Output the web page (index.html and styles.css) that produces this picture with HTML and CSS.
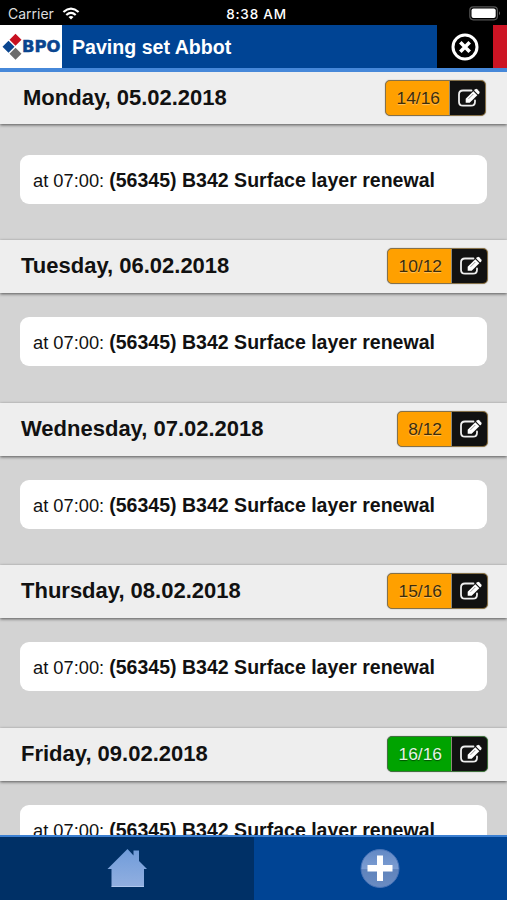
FILE: index.html
```
<!DOCTYPE html>
<html lang="en">
<head>
    <meta charset="UTF-8">
    <meta name="viewport" content="width=device-width, initial-scale=1.0">
    <title>Paving set Abbot</title>
    <link rel="stylesheet" href="styles.css">
</head>
<body>
    <!-- Shared icon -->
    <svg class="sprite" width="0" height="0">
        <symbol id="edit" viewBox="0 0 26 22">
            <path d="M16.500 3.500H8Q4 3.500 4 7.500V14.700Q4 18.700 8 18.700H16Q20 18.700 20 14.700V13.500" fill="none" stroke="#eee" stroke-width="1.800" stroke-linecap="round"/>
            <path d="M10.700 15.800V11.800L18.300 4.200L22.300 8.200L14.700 15.800Z" fill="#fff"/>
            <path d="M19.100 3.400L20.300 2.200Q21.200 1.500 22.100 2.200L24.300 4.400Q25 5.300 24.300 6.200L23.100 7.400Z" fill="#fff"/>
            <path d="M13.500 11.800L18.300 7" fill="none" stroke="#444" stroke-width=".6"/>
        </symbol>
    </svg>

    <div class="status-bar">
        <div class="carrier">
            <span>Carrier</span>
            <svg width="18" height="13" viewBox="0 0 18 13" fill="none" stroke="#fff" stroke-width="2.200">
                <path d="M1.400 5Q9-1.800 16.600 5M4.300 8Q9 3.800 13.700 8"/>
                <path d="M9 12.500L6.500 9.900Q9 8 11.500 9.900Z" fill="#fff" stroke="none"/>
            </svg>
        </div>
        <span class="clock">8:38 AM</span>
        <svg class="battery" width="32" height="15" viewBox="0 0 32 15">
            <rect x=".8" y=".8" width="27.600" height="13" rx="3.500" fill="none" stroke="#555" stroke-width="1.200"/>
            <rect x="2.500" y="2.500" width="24.200" height="9.600" rx="2" fill="#fff"/>
            <path d="M30 5.200Q32 7.200 30 9.200Z" fill="#666"/>
        </svg>
    </div>

    <header class="header">
        <div class="logo">
            <svg width="20" height="28" viewBox="0 0 20 28">
                <path d="M13.500 .8L19.500 6.800L13.500 12.800L7.500 6.800Z" fill="#c81020"/>
                <path d="M6.500 7.700L12.500 13.700L6.500 19.700L.5 13.700Z" fill="#0a458f"/>
                <path d="M13.500 14.700L19.500 20.700L13.500 26.700L7.500 20.700Z" fill="#6c6c6c"/>
            </svg>
            <span>BPO</span>
        </div>
        <h1>Paving set Abbot</h1>
        <div class="close">
            <svg width="28" height="28" viewBox="0 0 28 28" fill="none" stroke="#fff">
                <circle cx="14" cy="14" r="12" stroke-width="3"/>
                <path d="M9.300 9.300L18.700 18.700M18.700 9.300L9.300 18.700" stroke-width="3.600"/>
            </svg>
        </div>
        <div class="alert"></div>
    </header>

    <main class="days">
        <section class="day first">
            <div class="day-header">
                <h2>Monday, 05.02.2018</h2>
                <div class="badge"><span class="count">14/16</span><span class="edit"><svg width="26" height="22"><use href="#edit"/></svg></span></div>
            </div>
            <div class="job">at 07:00: <b>(56345) B342 Surface layer renewal</b></div>
        </section>
        <section class="day">
            <div class="day-header">
                <h2>Tuesday, 06.02.2018</h2>
                <div class="badge"><span class="count">10/12</span><span class="edit"><svg width="26" height="22"><use href="#edit"/></svg></span></div>
            </div>
            <div class="job">at 07:00: <b>(56345) B342 Surface layer renewal</b></div>
        </section>
        <section class="day">
            <div class="day-header">
                <h2>Wednesday, 07.02.2018</h2>
                <div class="badge"><span class="count">8/12</span><span class="edit"><svg width="26" height="22"><use href="#edit"/></svg></span></div>
            </div>
            <div class="job">at 07:00: <b>(56345) B342 Surface layer renewal</b></div>
        </section>
        <section class="day">
            <div class="day-header">
                <h2>Thursday, 08.02.2018</h2>
                <div class="badge"><span class="count">15/16</span><span class="edit"><svg width="26" height="22"><use href="#edit"/></svg></span></div>
            </div>
            <div class="job">at 07:00: <b>(56345) B342 Surface layer renewal</b></div>
        </section>
        <section class="day">
            <div class="day-header">
                <h2>Friday, 09.02.2018</h2>
                <div class="badge full"><span class="count">16/16</span><span class="edit"><svg width="26" height="22"><use href="#edit"/></svg></span></div>
            </div>
            <div class="job">at 07:00: <b>(56345) B342 Surface layer renewal</b></div>
        </section>
    </main>

    <nav class="tabs">
        <div class="tab active">
            <svg width="42" height="42" viewBox="0 0 42 42">
                <defs>
                    <linearGradient id="house" x1="0" y1="0" x2="0" y2="1">
                        <stop offset="0" stop-color="#709cda"/>
                        <stop offset="1" stop-color="#91afe0"/>
                    </linearGradient>
                </defs>
                <path d="M21.500 1L27.500 7.500V2.500H33V13L41 21H38V38.500H5.500V21H1.500Z" fill="url(#house)"/>
                <path d="M5.500 38.500H38" stroke="#b0c8ee"/>
            </svg>
        </div>
        <div class="tab">
            <svg width="42" height="42" viewBox="0 0 42 42">
                <defs>
                    <linearGradient id="disc" x1="0" y1="0" x2="0" y2="1">
                        <stop offset="0" stop-color="#6288c4"/>
                        <stop offset=".5" stop-color="#7c9dd2"/>
                        <stop offset=".53" stop-color="#5f83bc"/>
                        <stop offset="1" stop-color="#6a8cc2"/>
                    </linearGradient>
                </defs>
                <circle cx="21" cy="20.500" r="19" fill="url(#disc)" stroke="#4773b8"/>
                <path d="M18 7.500H24V17H33.500V23.500H24V33H18V23.500H8.500V17H18Z" fill="#fff"/>
            </svg>
        </div>
    </nav>
</body>
</html>
```
FILE: styles.css
```
* {
    box-sizing: border-box;
}
body {
    display: flex;
    flex-direction: column;
    height: 900px;
    margin: 0;
    overflow: hidden;
    background-color: #d3d3d3;
    color: #111;
    font-family: "Liberation Sans", Arial, sans-serif;
}
h1, h2 {
    margin: 0;
    white-space: nowrap;
}
.sprite {
    display: none;
}
.status-bar {
    display: grid;
    grid-template-columns: 1fr auto 1fr;
    align-items: center;
    flex: none;
    height: 25px;
    padding: 2px 6px 0 8px;
    background-color: #000;
    color: #fff;
    font-family: Inter, sans-serif;
    font-size: 14px;
}
.carrier {
    display: flex;
    align-items: center;
    gap: 8px;
    color: #ddd;
}
.clock {
    padding-left: 4px;
    font-size: 13.5px;
    font-weight: 500;
    letter-spacing: 0.8px;
}
.battery {
    justify-self: end;
}
.header {
    display: flex;
    flex: none;
    height: 47px;
    border-bottom: 4px solid #4688d9;
    background-color: #004494;
    color: #fff;
}
.logo {
    display: flex;
    align-items: center;
    width: 62px;
    padding-left: 2px;
    background-color: #fff;
    color: #0a458f;
    font-family: "DejaVu Sans", sans-serif;
    font-size: 16.4px;
    font-weight: bold;
    -webkit-text-stroke: 0.5px #0a458f;
}
.logo svg {
    flex: none;
}
.header h1 {
    flex: 1;
    padding-left: 10px;
    font-size: 19.6px;
    line-height: 44px;
}
.close {
    display: flex;
    align-items: center;
    justify-content: center;
    width: 56px;
    background-color: #000;
}
.alert {
    width: 14px;
    background-color: #cc1424;
}
.days {
    flex: 1;
    min-height: 0;
    overflow: hidden;
}
.day {
    height: 162.5px;
}
.day.first {
    height: 168px;
}
.day-header {
    display: flex;
    align-items: center;
    justify-content: space-between;
    height: 53px;
    padding: 0 19px 1px 21px;
    background-color: #eee;
    box-shadow: 0 1px 3px rgba(0, 0, 0, 0.6);
}
.first .day-header {
    height: 52px;
    padding: 0 21px 1px 23px;
}
.day-header h2 {
    font-size: 22px;
}
.badge {
    display: flex;
    height: 36px;
    overflow: hidden;
    border: 1px solid #85714a;
    border-radius: 5px;
    background-color: #ffa000;
    box-shadow: 0 0 1px rgba(0, 0, 0, 0.5);
    color: #3c2c0a;
    font-size: 17.4px;
    line-height: 35px;
    text-shadow: 0 1px 1px rgba(255, 255, 255, 0.4);
}
.badge.full {
    border-color: #40703d;
    background-color: #00a300;
    color: #e4f5e4;
    text-shadow: 0 1px 1px rgba(0, 0, 0, 0.5);
}
.count {
    padding: 0 9px 0 10px;
}
.edit {
    display: flex;
    align-items: center;
    justify-content: center;
    width: 36px;
    border-left: 1px solid #8f8a78;
    background-color: #111;
}
.job {
    height: 49px;
    margin: 24.4px 20px 0;
    padding-left: 13px;
    border-radius: 9px;
    background-color: #fff;
    font-size: 18.3px;
    line-height: 50px;
    white-space: nowrap;
}
.first .job {
    margin-top: 31px;
}
.job b {
    font-size: 19.55px;
}
.tabs {
    display: flex;
    flex: none;
    height: 65px;
    border-top: 2px solid #3c80d2;
}
.tab {
    display: flex;
    align-items: center;
    justify-content: center;
    flex: 1;
    background-color: #004494;
}
.tab.active {
    background-color: #003066;
}
```
